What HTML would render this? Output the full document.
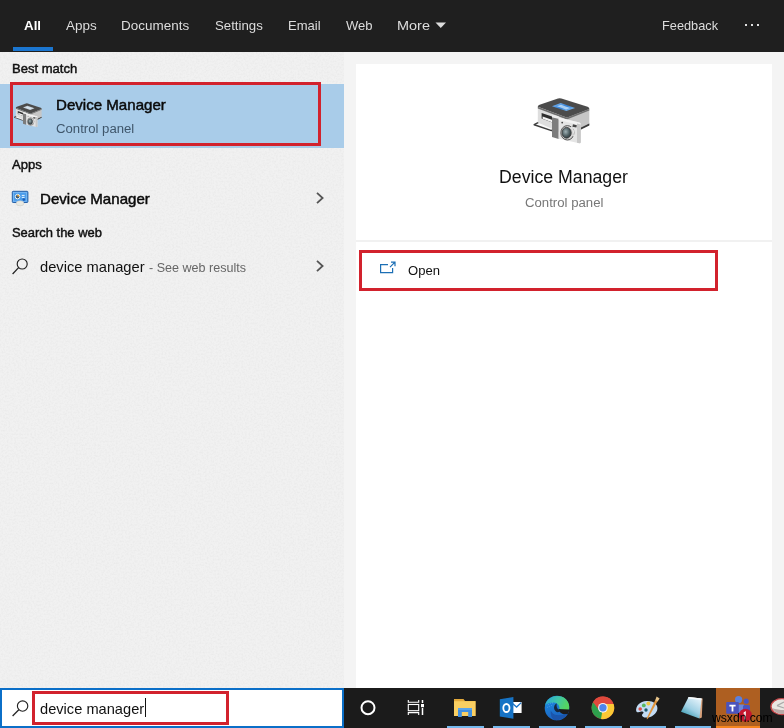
<!DOCTYPE html>
<html><head><meta charset="utf-8">
<style>
*{box-sizing:border-box;margin:0;padding:0}
html,body{width:784px;height:728px;overflow:hidden;background:#f2f2f2;font-family:"Liberation Sans",sans-serif;}
#root{position:relative;width:784px;height:728px;overflow:hidden;background:#f2f2f2}
.abs{position:absolute}
.tx{position:absolute;white-space:nowrap;line-height:1;transform-origin:0 0;display:block}
.red{position:absolute;border:3px solid #d2222d}
svg{position:absolute;overflow:visible}
</style></head><body>
<div id="root">
<!-- top bar -->
<div class="abs" style="left:0;top:0;width:784px;height:52px;background:#1f1f1f"></div>
<div class="abs" style="left:13px;top:47px;width:40px;height:4px;background:#1b76d0"></div>
<svg style="left:435px;top:22px" width="12" height="7" viewBox="0 0 12 7"><path d="M0.5 0.5 L11 0.5 L5.75 6 Z" fill="#dcdcdc"/></svg>
<div class="abs" style="left:745px;top:24px;width:2px;height:2px;background:#e0e0e0"></div>
<div class="abs" style="left:751px;top:24px;width:2px;height:2px;background:#e0e0e0"></div>
<div class="abs" style="left:757px;top:24px;width:2px;height:2px;background:#e0e0e0"></div>
<!-- panels -->
<div class="abs" style="left:0;top:52px;width:344px;height:636px;background:#f1f1f1"></div>
<svg style="left:0;top:52px" width="344" height="636"><filter id="nz" x="0" y="0" width="100%" height="100%"><feTurbulence type="fractalNoise" baseFrequency="0.55" numOctaves="2" seed="7"/><feColorMatrix type="matrix" values="0 0 0 0 0.45  0 0 0 0 0.45  0 0 0 0 0.45  0 0 0 1.6 -0.62"/></filter><rect width="344" height="636" filter="url(#nz)" opacity="0.14"/></svg>
<div class="abs" style="left:344px;top:52px;width:440px;height:636px;background:#f4f4f4"></div>
<div class="abs" style="left:356px;top:64px;width:416px;height:176px;background:#ffffff"></div>
<div class="abs" style="left:356px;top:240px;width:416px;height:2px;background:#f1f1f1"></div>
<div class="abs" style="left:356px;top:242px;width:416px;height:446px;background:#ffffff"></div>
<!-- best match row -->
<div class="abs" style="left:0;top:84px;width:344px;height:64px;background:#a9cce9"></div>
<div class="red" style="left:10px;top:82px;width:311px;height:64px"></div>
<!-- chevrons -->
<svg style="left:316px;top:192px" width="9" height="12" viewBox="0 0 9 12"><path d="M1 0.8 L6.6 6 L1 11.2" fill="none" stroke="#555" stroke-width="1.8"/></svg>
<svg style="left:316px;top:260px" width="9" height="12" viewBox="0 0 9 12"><path d="M1 0.8 L6.6 6 L1 11.2" fill="none" stroke="#555" stroke-width="1.8"/></svg>
<!-- search icon (web row) -->
<svg style="left:11px;top:257px" width="19" height="19" viewBox="0 0 19 19"><circle cx="11.2" cy="7" r="5" fill="none" stroke="#222" stroke-width="1.15"/><path d="M7.6 10.6 L1.6 17" stroke="#222" stroke-width="1.25" fill="none"/></svg>
<!-- open row -->
<div class="red" style="left:359px;top:250px;width:359px;height:41px"></div>
<svg style="left:379px;top:261px" width="18" height="14" viewBox="0 0 18 14"><path d="M9 3.6 H1.6 V11.6 H13.6 V7" fill="none" stroke="#1c6fb5" stroke-width="1.2"/><path d="M11 6.2 L16 1.2 M12 1.2 H16 V5.2" fill="none" stroke="#1c6fb5" stroke-width="1.2"/></svg>
<!-- taskbar -->
<div class="abs" style="left:0;top:688px;width:784px;height:40px;background:#1b1b1b"></div>
<div class="abs" style="left:0;top:688px;width:344px;height:40px;background:#ffffff;border:2px solid #0b6fc8"></div>
<div class="red" style="left:32px;top:691px;width:197px;height:34px"></div>
<svg style="left:11px;top:699px" width="19" height="19" viewBox="0 0 19 19"><circle cx="11.6" cy="7" r="5.2" fill="none" stroke="#222" stroke-width="1.15"/><path d="M7.8 10.8 L1.6 17" stroke="#222" stroke-width="1.25" fill="none"/></svg>
<div class="abs" style="left:145px;top:698px;width:1px;height:19px;background:#111"></div>
<!-- cortana -->
<svg style="left:358px;top:698px" width="20" height="20" viewBox="0 0 20 20"><circle cx="10" cy="9.7" r="6.5" fill="none" stroke="#fff" stroke-width="2"/></svg>
<!-- task view -->
<svg style="left:404px;top:697px" width="24" height="22" viewBox="0 0 24 22" fill="none" stroke="#fff" stroke-width="1.1">
<path d="M4.3 3 V5.3 H14.7 V3"/><rect x="4.3" y="7.5" width="10.4" height="6.2"/><path d="M4.3 18 V15.6 H14.7 V18"/>
<path d="M18.5 3 V6 M18.5 11 V18" stroke-width="1.5"/><rect x="17" y="7" width="3" height="3.2" fill="#fff" stroke="none"/></svg>
<!-- underlines -->
<div class="abs" style="left:447px;top:726px;width:37px;height:2px;background:#76b9ed"></div>
<div class="abs" style="left:493px;top:726px;width:37px;height:2px;background:#76b9ed"></div>
<div class="abs" style="left:539px;top:726px;width:37px;height:2px;background:#76b9ed"></div>
<div class="abs" style="left:585px;top:726px;width:37px;height:2px;background:#76b9ed"></div>
<div class="abs" style="left:630px;top:726px;width:36px;height:2px;background:#76b9ed"></div>
<div class="abs" style="left:675px;top:726px;width:36px;height:2px;background:#76b9ed"></div>
<!-- file explorer -->
<svg style="left:453px;top:697px;filter:url(#bl)" width="24" height="22" viewBox="0 0 24 22">
<path d="M1 2 H10.5 L12 4 H22.5 V19 H1 Z" fill="#e3a93a"/>
<path d="M1 4.2 H22.5 V19 H1 Z" fill="#f9cf62"/>
<path d="M5 11 H19 V20 H15.2 V15 H8.8 V20 H5 Z" fill="#3f8fe0"/>
<path d="M5 11 H19 V13 H5 Z" fill="#5aa4ea"/>
</svg>
<!-- outlook -->
<svg style="left:498px;top:695px;filter:url(#bl)" width="26" height="26" viewBox="0 0 26 26">
<rect x="14" y="7" width="9.6" height="11" fill="#fff"/>
<path d="M14.5 8.5 L18.6 12 L23.2 7.6" fill="none" stroke="#1a73c8" stroke-width="1.3"/>
<path d="M1.8 4.2 L15.4 2 V23.8 L1.8 21.4 Z" fill="#1673c5"/>
<ellipse cx="8.4" cy="13" rx="3.1" ry="4" fill="none" stroke="#fff" stroke-width="1.8"/>
</svg>
<!-- edge -->
<svg style="left:544px;top:695px;filter:url(#bl)" width="26" height="26" viewBox="0 0 26 26">
<defs><linearGradient id="eg1" x1="0" y1="0" x2="1" y2="0.3"><stop offset="0" stop-color="#27a3dc"/><stop offset="0.55" stop-color="#3fc6a8"/><stop offset="1" stop-color="#55d560"/></linearGradient>
<linearGradient id="eg2" x1="0" y1="0" x2="0.4" y2="1"><stop offset="0" stop-color="#2192e6"/><stop offset="1" stop-color="#1a62c0"/></linearGradient></defs>
<circle cx="13" cy="13" r="12.3" fill="url(#eg2)"/>
<path d="M1.2 10 C3 3 10 -0.6 17.6 1.6 C24 4 26.6 10.6 24.6 15.4 L15.4 15.2 C16.2 11.6 14 8 10 7.6 C6 7.4 2.6 9 1.2 10 Z" fill="url(#eg1)"/>
<path d="M14.4 14 L25 14.6 C25.2 16.2 24.6 17.8 23.6 19 C19.6 20 15.6 18.6 14.4 14 Z" fill="#1b1b1b"/>
<path d="M12.8 8.2 C9.8 9.8 9.2 13.6 11.4 16 C13 17.8 15.8 17.6 16.4 15.2 C13.8 15.2 12 12 12.8 8.2 Z" fill="#15273d"/>
<path d="M6.8 15.4 C8.6 20 15 22 23 18.8 C21 23 15.6 25.8 10.8 25 C7.6 23.4 6.2 19.4 6.8 15.4 Z" fill="#1a55ac"/>
<g fill="#9fd0f5" opacity="0.7"><circle cx="4.4" cy="9.6" r="0.4"/><circle cx="6.4" cy="8.6" r="0.4"/><circle cx="5.2" cy="11.4" r="0.4"/><circle cx="7.4" cy="10.6" r="0.4"/><circle cx="3.6" cy="12.2" r="0.4"/><circle cx="8.6" cy="8" r="0.4"/></g>
</svg>
<!-- chrome -->
<svg style="left:591px;top:696px;filter:url(#bl)" width="24" height="24" viewBox="0 0 24 24">
<circle cx="11.9" cy="11.8" r="11.3" fill="#dd4b3e"/>
<path d="M11.9 11.8 L2.1 6.2 A11.3 11.3 0 0 0 10 22.95 L16 14.2 Z" fill="#2da04e"/>
<path d="M11.9 11.8 L10 22.95 A11.3 11.3 0 0 0 22.6 8 L11.9 8 Z" fill="#fbc934"/>
<path d="M11.9 7 H22.2 A11.3 11.3 0 0 0 2.1 6.2 L7.6 13.6 Z" fill="#e04a3c"/>
<circle cx="11.9" cy="11.8" r="4.9" fill="#f2f2f2"/>
<circle cx="11.9" cy="11.8" r="3.7" fill="#4e86ec"/>
</svg>
<!-- paint -->
<svg style="left:634px;top:695px;filter:url(#bl)" width="28" height="26" viewBox="0 0 28 26">
<path d="M2.2 16 C1.4 11 6 6.4 12.6 6 C19 5.6 24 9 23.4 14 C22.8 19.4 16 23.6 10.4 22.4 C7.4 21.8 7.6 19.6 9 18.6 C10.2 17.6 9.4 16 7.2 16.6 C4.6 17.4 2.6 17.6 2.2 16 Z" fill="#c3dcf4"/>
<circle cx="9.8" cy="10.4" r="1.9" fill="#58b860"/><circle cx="14.4" cy="8.6" r="2" fill="#f0c544"/><circle cx="6.2" cy="14" r="1.8" fill="#d9534a"/><circle cx="12" cy="15" r="1.7" fill="#1f5a6a"/>
<path d="M21.4 4.8 L23.6 6 L14 23.6 L12.8 24.4 L12.8 23 Z" fill="#e0953e"/>
<path d="M21.2 5.2 L22.6 1.6 L25.6 3.4 L23.6 6.4 Z" fill="#e9c58a"/>
</svg>
<!-- notepad -->
<svg style="left:679px;top:695px;filter:url(#bl)" width="28" height="26" viewBox="0 0 28 26">
<defs><linearGradient id="ng" x1="0.8" y1="0" x2="0.2" y2="1"><stop offset="0" stop-color="#e8f4fb"/><stop offset="0.55" stop-color="#9fd0e4"/><stop offset="1" stop-color="#2a93a8"/></linearGradient></defs>
<path d="M10.6 2.2 L23.6 3.6 L22.8 22.4 L20.6 23.6 Z" fill="#d6a07a"/>
<path d="M9.6 2 L22.6 3.4 L20.4 23.4 L2 16.8 Z" fill="url(#ng)"/>
<path d="M9.6 2 L22.6 3.4 L22.4 5 L9 3.4 Z" fill="#f4fafd"/>
</svg>
<!-- teams -->
<div class="abs" style="left:716px;top:688px;width:44px;height:40px;background:#ae5f21"></div>
<div class="abs" style="left:716px;top:726px;width:44px;height:2px;background:#f5851f"></div>
<svg style="left:722px;top:694px;filter:url(#bl)" width="34" height="30" viewBox="0 0 34 30">
<circle cx="16.6" cy="5.6" r="3.6" fill="#5b80dc"/>
<circle cx="24.2" cy="7.2" r="2.6" fill="#4a55c0"/>
<rect x="14" y="10.4" width="9" height="9.6" rx="1.5" fill="#6a86dc"/>
<rect x="21" y="11" width="7" height="8" rx="1.5" fill="#4a55c0"/>
<rect x="4.2" y="8" width="12.6" height="11.8" rx="0.8" fill="#4b53bc"/>
<path d="M7.4 10.8 H13.6 V12.6 H11.4 V17.4 H9.6 V12.6 H7.4 Z" fill="#fff"/>
<circle cx="23.3" cy="21.2" r="6.5" fill="#c5162e"/>
<path d="M21.6 18.6 L23.8 17 V25.4 H22.4 V19.4 L21.6 19.9 Z" fill="#fff"/>
</svg>
<!-- last icon (partially cut) -->
<svg style="left:768px;top:696px;filter:url(#bl)" width="16" height="22" viewBox="0 0 16 22">
<ellipse cx="14" cy="10.6" rx="11" ry="8" fill="#e9e6e2" stroke="#c8474a" stroke-width="1.4"/>
<path d="M4 12 C7 17 12 18.4 16 18 V14 C12 14 8 13.4 4 12 Z" fill="#b9a9a6"/>
<path d="M9 9.6 L16 6 M9 9.6 L16 12" stroke="#a9a9a9" stroke-width="1.2" fill="none"/>
</svg>
<!-- watermark -->
<!-- device manager icon symbol -->
<svg width="0" height="0" style="left:0;top:0"><defs>
<filter id="bl" x="-10%" y="-10%" width="120%" height="120%"><feGaussianBlur stdDeviation="0.45"/></filter>
<filter id="bl2" x="-10%" y="-10%" width="120%" height="120%"><feGaussianBlur stdDeviation="0.8"/></filter>
<linearGradient id="scr" x1="0" y1="0" x2="1" y2="1"><stop offset="0" stop-color="#8fc3f5"/><stop offset="0.5" stop-color="#2f7fd8"/><stop offset="1" stop-color="#9fd0f7"/></linearGradient>
<radialGradient id="lens" cx="0.4" cy="0.4" r="0.7"><stop offset="0" stop-color="#9fb0b4"/><stop offset="0.6" stop-color="#4a5a5e"/><stop offset="1" stop-color="#2a3033"/></radialGradient>
<symbol id="dm" viewBox="0 0 64 54">
 <!-- tray -->
 <path d="M4.2 30.7 L10.5 27.4 L27 33 L21.5 36.6 Z" fill="#fbfbfb" stroke="#3c3c3c" stroke-width="1.5" stroke-linejoin="round"/>
 <!-- left face -->
 <path d="M7.8 13.2 L36.9 23 L36.9 41.4 L7.8 28.6 Z" fill="#dedede"/>
 <path d="M11.6 19 L25 23.6 L25 29.4 L11.6 24.6 Z" fill="#2f2f2f"/>
 <path d="M12.6 22.4 L24 26.4 L24 29 L12.6 24.8 Z" fill="#f4f4f4"/>
 <!-- right face -->
 <path d="M36.9 23 L59.3 14.2 L59.3 31 L36.9 41.4 Z" fill="#c6c6c6"/>
 <path d="M45 36.4 L59.3 29.6 L59.3 31.4 L45 38.4 Z" fill="#3a3a3a"/>
 <!-- top -->
 <path d="M7.8 12.8 Q7.4 11.6 9.6 10.8 L28 4.6 Q29.7 4.1 31.4 4.6 L57.6 12.8 Q59.6 13.6 59.2 15 L38.6 23 Q36.9 23.6 35.2 23 Z" fill="#4c4c4c"/>
 <path d="M7.8 12.8 L35.2 23 Q36.9 23.6 38.6 23 L59.2 15 L59.3 16.6 L36.9 25.4 L7.8 14.6 Z" fill="#6e6e6e"/>
 <path d="M22 12.3 L30.7 9 L45 13.9 L36.3 17.1 Z" style="fill:var(--scrfill)"/>
 <path d="M27 12.2 L31 10.8 L40 13.9 L36 15.4 Z" fill="#d8ecfb" opacity="0.7"/>
 <!-- camera side -->
 <path d="M22 23.2 L28.7 24.6 L28.7 45 L22 43 Z" fill="#7b7b7b"/>
 <path d="M22 21.6 Q22 20.8 23.4 21 L28.7 22.2 L28.7 24.8 L22 23.4 Z" fill="#ececec"/>
 <!-- camera front -->
 <path d="M28.7 23.4 L49.4 28.6 Q50.8 29 50.8 30.4 L50.8 48 Q50.8 49.6 49.2 49.2 L28.7 44.8 Z" fill="#e4e4e4"/>
 <path d="M28.7 23.4 L49.4 28.6 Q50.8 29 50.8 30.4 L50.8 31.6 L28.7 26 Z" fill="#f2f2f2"/>
 <path d="M47 29.6 L50.8 30.6 L50.8 48 Q50.8 49.6 49.2 49.2 L47 48.8 Z" fill="#c8c8c8"/>
 <rect x="42.6" y="30.6" width="4" height="2.4" fill="#444" transform="rotate(13 44 32)"/>
 <circle cx="32.2" cy="28.6" r="0.9" fill="#444"/>
 <!-- lens -->
 <ellipse cx="37.4" cy="38.8" rx="6.6" ry="7.2" fill="#d4d4d4" stroke="#585858" stroke-width="1"/>
 <ellipse cx="36.6" cy="38.8" rx="4.6" ry="5.4" fill="url(#lens)" stroke="#333" stroke-width="0.8"/>
 <path d="M41 33 Q44.6 36 43.6 42.4" stroke="#fff" stroke-width="1.2" fill="none" opacity="0.8"/>
</symbol>
</defs></svg>
<svg style="left:530px;top:94px;filter:url(#bl);--scrfill:url(#scr)" width="64" height="54"><use href="#dm" width="64" height="54"/></svg>
<svg style="left:11.6px;top:100.6px;filter:url(#bl);--scrfill:#c9d3dc" width="32" height="28.6" viewBox="0 0 64 54" preserveAspectRatio="none"><use href="#dm" width="64" height="54"/></svg>
<!-- apps row device manager icon -->
<svg style="left:10px;top:189px;filter:url(#bl)" width="20" height="18" viewBox="0 0 20 18">
<rect x="2.3" y="2.3" width="15.6" height="11.2" rx="0.8" fill="#4c9cea" stroke="#2a62a8" stroke-width="1"/>
<rect x="3.6" y="3.6" width="13" height="8.6" fill="none" stroke="#8cc4f6" stroke-width="0.6"/>
<circle cx="7.6" cy="7.6" r="2.3" fill="#33557a" stroke="#f4f8f4" stroke-width="1"/>
<circle cx="8.2" cy="6.8" r="1" fill="#f0a830"/>
<path d="M11.8 6.4 H14.6 M11.8 8.4 H14.6" stroke="#eaf6ff" stroke-width="1"/>
<circle cx="13.8" cy="10.6" r="1.3" fill="#1d5fb8"/>
<ellipse cx="10.05" cy="14.3" rx="3.9" ry="2.5" fill="#e9e9e2" stroke="#c4c4bc" stroke-width="0.5"/>
</svg>

<div id="t1" class="tx" style="left:23.76px;top:19.03px;font-size:13px;font-weight:bold;color:#ffffff;transform:scaleX(1.0260)">All</div>
<div id="t2" class="tx" style="left:66.42px;top:19.10px;font-size:13px;font-weight:normal;color:#dcdcdc;transform:scaleX(1.0348)">Apps</div>
<div id="t3" class="tx" style="left:121.01px;top:19.13px;font-size:13px;font-weight:normal;color:#dcdcdc;transform:scaleX(1.0363)">Documents</div>
<div id="t4" class="tx" style="left:214.80px;top:19.07px;font-size:13px;font-weight:normal;color:#dcdcdc;transform:scaleX(1.0168)">Settings</div>
<div id="t5" class="tx" style="left:288.09px;top:19.03px;font-size:13px;font-weight:normal;color:#dcdcdc;transform:scaleX(1.0040)">Email</div>
<div id="t6" class="tx" style="left:346.00px;top:19.00px;font-size:13px;font-weight:normal;color:#dcdcdc;transform:scaleX(1.0040)">Web</div>
<div id="t7" class="tx" style="left:397.10px;top:19.13px;font-size:13px;font-weight:normal;color:#dcdcdc;transform:scaleX(1.1120)">More</div>
<div id="t8" class="tx" style="left:661.69px;top:19.03px;font-size:13px;font-weight:normal;color:#dcdcdc;transform:scaleX(0.9816)">Feedback</div>
<div id="t9" class="tx" style="left:11.83px;top:61.64px;font-size:13px;font-weight:normal;-webkit-text-stroke:0.45px currentColor;color:#111111;transform:scaleX(1.0040)">Best match</div>
<div id="t10" class="tx" style="left:55.96px;top:97.81px;font-size:14.5px;font-weight:normal;-webkit-text-stroke:0.45px currentColor;color:#0a0a0a;transform:scaleX(1.0404)">Device Manager</div>
<div id="t11" class="tx" style="left:55.92px;top:123.46px;font-size:12.5px;font-weight:normal;color:#3f566b;transform:scaleX(1.0530)">Control panel</div>
<div id="t12" class="tx" style="left:12.30px;top:157.85px;font-size:13px;font-weight:normal;-webkit-text-stroke:0.45px currentColor;color:#111111;transform:scaleX(1.0040)">Apps</div>
<div id="t13" class="tx" style="left:40.26px;top:191.81px;font-size:14.5px;font-weight:normal;-webkit-text-stroke:0.45px currentColor;color:#0a0a0a;transform:scaleX(1.0404)">Device Manager</div>
<div id="t14" class="tx" style="left:11.97px;top:225.59px;font-size:13px;font-weight:normal;-webkit-text-stroke:0.45px currentColor;color:#111111;transform:scaleX(0.9946)">Search the web</div>
<div id="t15" class="tx" style="left:40.37px;top:259.05px;font-size:15px;font-weight:normal;color:#111111;transform:scaleX(0.9802)">device manager</div>
<div id="t16" class="tx" style="left:149.17px;top:262.06px;font-size:12.5px;font-weight:normal;color:#666666;transform:scaleX(1.0040)">- See web results</div>
<div id="t17" class="tx" style="left:499.05px;top:168.84px;font-size:17.5px;font-weight:normal;color:#111111;transform:scaleX(1.0117)">Device Manager</div>
<div id="t18" class="tx" style="left:525.36px;top:197.45px;font-size:12.5px;font-weight:normal;color:#777777;transform:scaleX(1.0542)">Control panel</div>
<div id="t19" class="tx" style="left:408.30px;top:263.90px;font-size:13px;font-weight:normal;color:#111111;transform:scaleX(1.0040)">Open</div>
<div id="t20" class="tx" style="left:40.20px;top:701.45px;font-size:15px;font-weight:normal;color:#111111;transform:scaleX(0.9759)">device manager</div>
<div id="wm" class="tx" style="left:712.21px;top:711.64px;font-size:12px;font-weight:normal;color:#000000;transform:scaleX(1.0118)">wsxdn.com</div>
</div>
</body></html>
